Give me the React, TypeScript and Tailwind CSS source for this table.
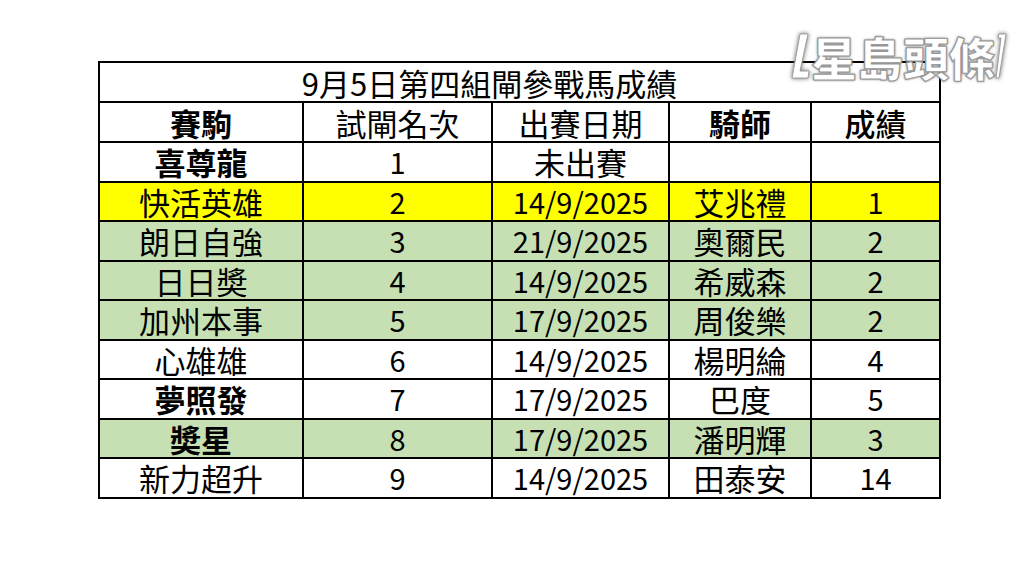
import React from 'react';

type Row = {
  horse: string;
  rank: string;
  date: string;
  jockey: string;
  result: string;
  tone: 'white' | 'yellow' | 'green';
  bold?: boolean;
};

const rows: Row[] = [
  { horse: '喜尊龍', rank: '1', date: '未出賽', jockey: '', result: '', tone: 'white', bold: true },
  { horse: '快活英雄', rank: '2', date: '14/9/2025', jockey: '艾兆禮', result: '1', tone: 'yellow' },
  { horse: '朗日自強', rank: '3', date: '21/9/2025', jockey: '奧爾民', result: '2', tone: 'green' },
  { horse: '日日奬', rank: '4', date: '14/9/2025', jockey: '希威森', result: '2', tone: 'green' },
  { horse: '加州本事', rank: '5', date: '17/9/2025', jockey: '周俊樂', result: '2', tone: 'green' },
  { horse: '心雄雄', rank: '6', date: '14/9/2025', jockey: '楊明綸', result: '4', tone: 'white' },
  { horse: '夢照發', rank: '7', date: '17/9/2025', jockey: '巴度', result: '5', tone: 'white', bold: true },
  { horse: '奬星', rank: '8', date: '17/9/2025', jockey: '潘明輝', result: '3', tone: 'green', bold: true },
  { horse: '新力超升', rank: '9', date: '14/9/2025', jockey: '田泰安', result: '14', tone: 'white' },
];

const toneBg = {
  white: 'bg-white',
  yellow: 'bg-[#ffff00]',
  green: 'bg-[#c6e0b4]',
};

const cell = 'border-2 border-black text-center align-middle p-0 leading-none';
const cjk = 'text-[31px]';
const num = 'text-[29px]';

function Logo() {
  return (
    <div className="absolute left-[791px] top-[31px] flex items-center h-[50px]">
      <svg width="20" height="48" viewBox="0 0 20 48" className="drop-shadow-[0_0_2px_#666]">
        <path d="M9 2 L17 2 L9 39 L18 39 L17 46 L1 46 Z" fill="white" stroke="#a0a0a0" strokeWidth="1" />
      </svg>
      <span className="text-white font-black text-[46px] leading-none [text-shadow:0_0_3px_#555,0_0_1px_#777] [-webkit-text-stroke:1px_#999]">
        星島頭條
      </span>
      <svg width="12" height="48" viewBox="0 0 12 48" className="drop-shadow-[0_0_2px_#666]">
        <path d="M4 2 L11 2 L4 46 L1 46 L6 6 L3 6 Z" fill="white" stroke="#a0a0a0" strokeWidth="1" />
      </svg>
    </div>
  );
}

export default function App() {
  return (
    <div
      className="relative w-[1024px] h-[569px] bg-white overflow-hidden pl-[98px] pt-[61px] text-black"
      style={{ fontFamily: '"Noto Sans CJK TC", "Noto Sans", sans-serif' }}
    >
      <table className="border-collapse table-fixed w-[841px] border-2 border-black">
        <colgroup>
          <col className="w-[204px]" />
          <col className="w-[189px]" />
          <col className="w-[177px]" />
          <col className="w-[142px]" />
          <col className="w-[129px]" />
        </colgroup>
        <thead>
          <tr className="h-[40px]">
            <th colSpan={5} className={`${cell} font-normal text-[31px] pr-[60px]`}>9月5日第四組閘參戰馬成績</th>
          </tr>
          <tr className={`h-[40px] ${cjk}`}>
            <th className={`${cell} font-bold`}>賽駒</th>
            <th className={`${cell} font-normal`}>試閘名次</th>
            <th className={`${cell} font-normal`}>出賽日期</th>
            <th className={`${cell} font-bold`}>騎師</th>
            <th className={`${cell} font-medium`}>成績</th>
          </tr>
        </thead>
        <tbody>
          {rows.map((r, i) => (
            <tr key={i} className={`h-[39.5px] ${toneBg[r.tone]}`}>
              <td className={`${cell} ${cjk} ${r.bold ? 'font-semibold' : ''}`}>{r.horse}</td>
              <td className={`${cell} ${num}`}>{r.rank}</td>
              <td className={`${cell} ${r.date.includes('/') ? num : cjk}`}>{r.date}</td>
              <td className={`${cell} ${cjk}`}>{r.jockey}</td>
              <td className={`${cell} ${num}`}>{r.result}</td>
            </tr>
          ))}
        </tbody>
      </table>
      <Logo />
    </div>
  );
}
